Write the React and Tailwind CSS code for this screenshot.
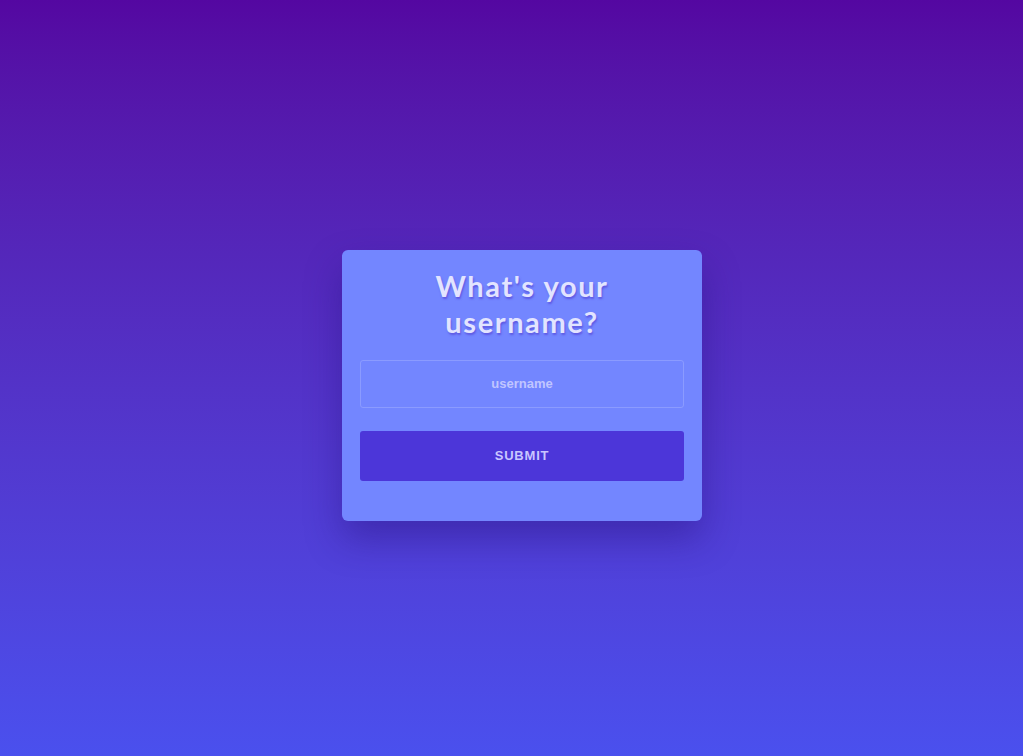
import React, { useState } from 'react';

const App = () => {
  const [username, setUsername] = useState('');

  return (
    <div className="min-h-screen w-full flex items-center justify-center pl-[21px] pt-[14px] bg-gradient-to-b from-[#5407a1] to-[#4a50ee]">
      <div className="w-[360px] bg-[#7386ff] rounded-[6px] px-[18px] pt-[18px] pb-[40px] shadow-[0_18px_36px_rgba(40,20,130,0.45)]">
        <h1
          className="mx-auto w-[250px] text-center text-[29px] leading-[36px] font-bold text-[#e2e4ff] tracking-[1.6px] [text-shadow:1px_2px_2px_rgba(85,70,215,0.7)]"
          style={{ fontFamily: 'Lato, "Open Sans", sans-serif' }}
        >
          What's your username?
        </h1>
        <form className="mt-[20px]" onSubmit={(e) => e.preventDefault()}>
          <input
            type="text"
            value={username}
            onChange={(e) => setUsername(e.target.value)}
            placeholder="username"
            className="block w-full h-[48px] rounded-[3px] border border-[#8b9bff] bg-transparent text-center text-[13px] font-bold text-[#c0c6ff] placeholder:text-[#c0c5ff] outline-none"
            style={{ fontFamily: '"Liberation Sans", Arial, sans-serif' }}
          />
          <button
            type="submit"
            className="block w-full h-[50px] mt-[23px] rounded-[3px] bg-[#4c36d9] text-[13px] font-bold tracking-[0.8px] text-[#c9c6ff]"
            style={{ fontFamily: '"Liberation Sans", Arial, sans-serif' }}
          >
            SUBMIT
          </button>
        </form>
      </div>
    </div>
  );
};

export default App;
